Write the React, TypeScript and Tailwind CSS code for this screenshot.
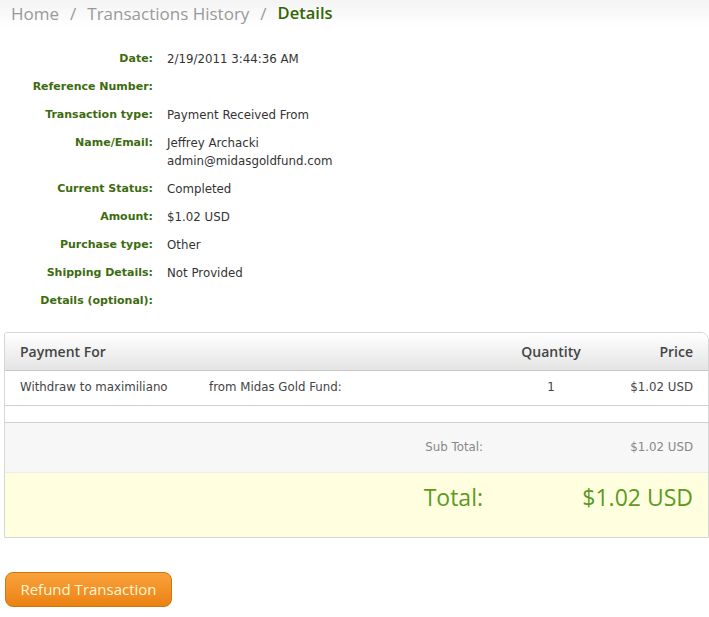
import React from "react";

const rows: { label: string; value: React.ReactNode }[] = [
  { label: "Date:", value: "2/19/2011 3:44:36 AM" },
  { label: "Reference Number:", value: "" },
  { label: "Transaction type:", value: "Payment Received From" },
  {
    label: "Name/Email:",
    value: (
      <>
        <div>Jeffrey Archacki</div>
        <div>admin@midasgoldfund.com</div>
      </>
    ),
  },
  { label: "Current Status:", value: "Completed" },
  { label: "Amount:", value: "$1.02 USD" },
  { label: "Purchase type:", value: "Other" },
  { label: "Shipping Details:", value: "Not Provided" },
  { label: "Details (optional):", value: "" },
];

const tahoma = "font-['DejaVu_Sans',sans-serif]";
const open = "font-['Open_Sans',sans-serif]";

export default function App() {
  return (
    <div className="w-[709px] h-[617px] bg-white overflow-hidden">
      <div className={`${open} h-[27px] flex items-center pl-[11px] text-[17px] bg-gradient-to-b from-[#f4f4f4] to-white`}>
        <span className="text-[#999]">Home</span>
        <span className="text-[#999] mx-[11px]">/</span>
        <span className="text-[#999]">Transactions History</span>
        <span className="text-[#999] mx-[11px]">/</span>
        <span className="text-[#336600] font-semibold text-[16.5px]">Details</span>
      </div>

      <div className={`${tahoma} mt-[18px]`}>
        {rows.map((r) => (
          <div key={r.label} className="flex py-[5px] leading-[18px]">
            <div className="w-[153px] text-right font-bold text-[11px] text-[#3d6b0f] shrink-0">{r.label}</div>
            <div className="pl-[14px] text-[11.8px] text-[#333]">{r.value}</div>
          </div>
        ))}
      </div>

      <div className="ml-[4px] mt-[17px] w-[705px] border border-[#d6d6d6] rounded-tr-[8px] rounded-tl-[3px] overflow-hidden">
        <div className={`${open} flex h-[38px] items-center font-semibold text-[14px] text-[#444] bg-gradient-to-b from-white to-[#e4e4e4] border-b border-[#c8c8c8]`}>
          <div className="w-[493px] pl-[15px]">Payment For</div>
          <div className="w-[106px] text-center">Quantity</div>
          <div className="flex-1 text-right pr-[15px]">Price</div>
        </div>
        <div className={`${tahoma} flex h-[35px] items-center text-[11.8px] text-[#444] border-b border-[#d0d0d0]`}>
          <div className="w-[493px] pl-[15px] flex">
            <span className="w-[189px]">Withdraw to maximiliano</span>
            <span>from Midas Gold Fund:</span>
          </div>
          <div className="w-[106px] text-center">1</div>
          <div className="flex-1 text-right pr-[15px]">$1.02 USD</div>
        </div>
        <div className="h-[17px] border-b border-[#d0d0d0]" />
        <div className={`${tahoma} flex h-[50px] items-center text-[11.8px] text-[#888] bg-[#f7f7f7] border-b border-[#ececec]`}>
          <div className="w-[478px] text-right">Sub Total:</div>
          <div className="flex-1 text-right pr-[15px]">$1.02 USD</div>
        </div>
        <div className={`${open} flex h-[64px] items-center text-[23px] text-[#5b9a1f] bg-[#ffffe0] pb-[16px]`}>
          <div className="w-[478px] text-right">Total:</div>
          <div className="flex-1 text-right pr-[15px]">$1.02 USD</div>
        </div>
      </div>

      <div className="mt-[34px] ml-[5px]">
        <button className={`${open} w-[167px] h-[35px] rounded-[8px] border border-[#d2730e] bg-gradient-to-b from-[#f9a23a] to-[#ec820f] text-[#fff6d5] text-[15px]`}>
          Refund Transaction
        </button>
      </div>
    </div>
  );
}
